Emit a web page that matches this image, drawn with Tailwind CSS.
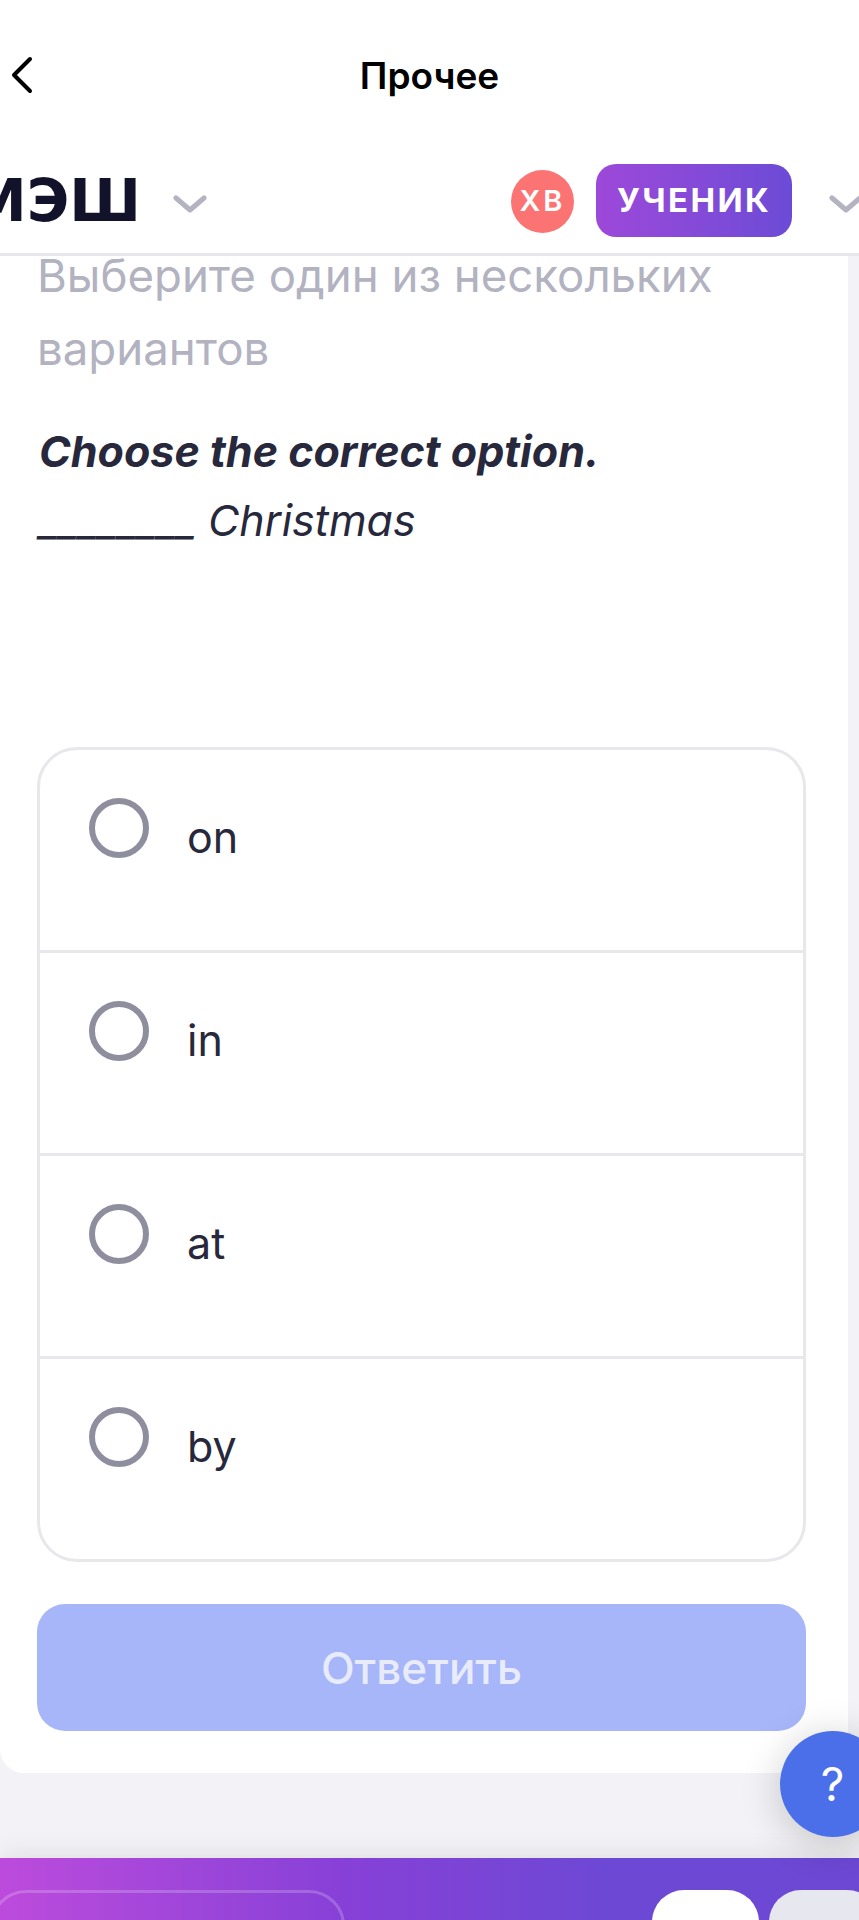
<!DOCTYPE html>
<html lang="ru">
<head>
    <meta charset="UTF-8">
    <meta name="viewport" content="width=device-width, initial-scale=1.0">
    <title>Прочее</title>
    <script src="https://cdn.jsdelivr.net/npm/@tailwindcss/browser@4"></script>
</head>
<body class="font-['Inter',sans-serif] bg-[#f3f3f7]">
    <div class="relative w-[859px] h-[1920px] overflow-hidden flex flex-col">

        <!-- Browser title bar -->
        <div class="relative h-[134px] shrink-0 bg-white flex items-end justify-center pb-[36px]">
            <button class="absolute left-[10px] top-[56px]">
                <svg class="block" width="24" height="38" viewBox="0 0 24 38" fill="none" stroke="#000" stroke-width="4" stroke-linecap="round" stroke-linejoin="round">
                    <path d="M20 3 L4 19 L20 35"/>
                </svg>
            </button>
            <h1 class="text-[37px] leading-[44px] font-semibold text-black">Прочее</h1>
        </div>

        <!-- Site header -->
        <header class="h-[122px] shrink-0 bg-white border-b-[3px] border-[#e6e6eb] flex items-center pt-[14px]">
            <span class="ml-[-31px] font-['DejaVu_Sans',sans-serif] text-[58px] leading-none font-bold text-[#12122a] blur-[0.6px]">МЭШ</span>
            <svg class="ml-[32px] mt-[6px]" width="34" height="18" viewBox="0 0 34 18" fill="none" stroke="#b3b3c2" stroke-width="5" stroke-linecap="round" stroke-linejoin="round">
                <path d="M3 3 L17 15 L31 3"/>
            </svg>
            <div class="ml-auto flex items-center mr-[-4px]">
                <div class="w-[63px] h-[63px] rounded-full bg-[#fb7373] flex items-center justify-center text-white text-[29px] font-semibold tracking-[3px] mt-[1px]">ХВ</div>
                <div class="ml-[22px] w-[196px] h-[73px] rounded-[20px] bg-gradient-to-r from-[#9d48d9] to-[#6b4bd6] flex items-center justify-center text-white text-[33px] font-bold tracking-[2.4px]">УЧЕНИК</div>
                <svg class="ml-[37px] mt-[6px] shrink-0" width="34" height="18" viewBox="0 0 34 18" fill="none" stroke="#b3b3c2" stroke-width="5" stroke-linecap="round" stroke-linejoin="round">
                    <path d="M3 3 L17 15 L31 3"/>
                </svg>
            </div>
        </header>

        <!-- Question card -->
        <main class="w-[848px] h-[1517px] shrink-0 bg-white rounded-bl-[24px] pl-[37px] pr-[42px] overflow-hidden">
            <p class="mt-[-17px] text-[45.6px] leading-[73px] text-[#b2b2c0] w-[730px]">Выберите один из нескольких вариантов</p>
            <p class="mt-[32px] pl-[2px] text-[43px] leading-[69px] italic font-bold text-[#28283c]">Choose the correct option.</p>
            <p class="pl-[2px] text-[43px] leading-[69px] italic text-[#28283c]">________ Christmas</p>

            <div class="mt-[192px] border-[3px] border-[#e8e8ec] rounded-[40px] divide-y-[3px] divide-[#e8e8ec]">
                <label class="h-[203px] flex items-start pl-[49px] pt-[48px]">
                    <span class="w-[60px] h-[60px] rounded-full border-[6px] border-[#8e8e9f]"></span>
                    <span class="ml-[38px] mt-[9px] text-[43px] leading-[60px] text-[#28283c]">on</span>
                </label>
                <label class="h-[203px] flex items-start pl-[49px] pt-[48px]">
                    <span class="w-[60px] h-[60px] rounded-full border-[6px] border-[#8e8e9f]"></span>
                    <span class="ml-[38px] mt-[9px] text-[43px] leading-[60px] text-[#28283c]">in</span>
                </label>
                <label class="h-[203px] flex items-start pl-[49px] pt-[48px]">
                    <span class="w-[60px] h-[60px] rounded-full border-[6px] border-[#8e8e9f]"></span>
                    <span class="ml-[38px] mt-[9px] text-[43px] leading-[60px] text-[#28283c]">at</span>
                </label>
                <label class="h-[200px] flex items-start pl-[49px] pt-[48px]">
                    <span class="w-[60px] h-[60px] rounded-full border-[6px] border-[#8e8e9f]"></span>
                    <span class="ml-[38px] mt-[9px] text-[43px] leading-[60px] text-[#28283c]">by</span>
                </label>
            </div>

            <button class="mt-[42px] w-full h-[127px] rounded-[28px] bg-[#a6b6f9] text-[#e8ebf9] text-[44px] font-medium">Ответить</button>
        </main>

        <!-- Footer -->
        <footer class="mt-auto h-[62px] shrink-0 relative bg-gradient-to-r from-[#bc4bdc] via-[#8740d7] via-40% to-[#6d48d4] to-70% shadow-[0_-6px_24px_rgba(0,0,0,0.07)] flex items-start pt-[32px]">
            <div class="ml-[-10px] w-[355px] h-[60px] rounded-t-[36px] border-[3px] border-white/20"></div>
            <div class="ml-auto flex gap-[10px] mr-[-20px]">
                <div class="w-[107px] h-[60px] rounded-t-[32px] bg-white"></div>
                <div class="w-[110px] h-[60px] rounded-t-[32px] bg-[#e6e7ef]"></div>
            </div>
        </footer>

        <!-- Help button floats over the page corner -->
        <button class="absolute left-[780px] top-[1731px] w-[106px] h-[106px] rounded-full bg-[#4a6fe8] shadow-[0_6px_40px_rgba(0,0,0,0.2)] text-white text-[46px] leading-none flex items-center justify-center pr-[1px]">?</button>
    </div>
</body>
</html>
